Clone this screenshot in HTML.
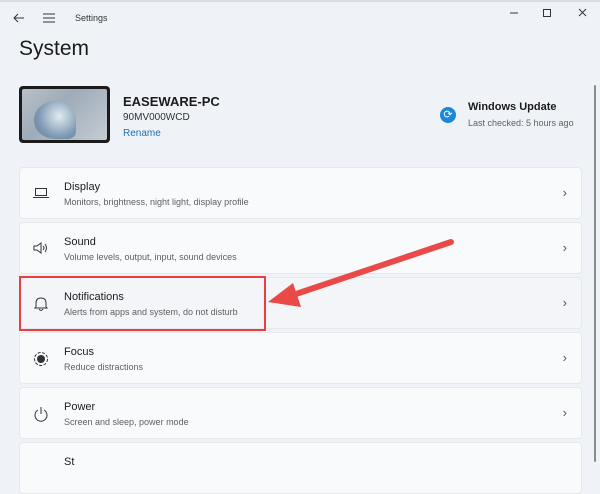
<!DOCTYPE html>
<html><head><style>
*{margin:0;padding:0;box-sizing:border-box}
body{width:600px;height:462px;overflow:hidden;background:#eff3f8;font-family:"Liberation Sans",sans-serif;position:relative;color:#1b1b1b}
.a{position:absolute}
.card{position:absolute;left:19px;width:563px;height:52px;background:#f9fafc;border:1px solid #e6e8ec;border-radius:4px}
.card .t{position:absolute;left:44px;top:13px;font-size:11px;color:#1b1b1b}
.card .s{position:absolute;left:44px;top:29px;font-size:9px;color:#606060}
.card .c{position:absolute;right:14px;top:17px;font-size:13px;color:#555}
.card svg{position:absolute;left:13px;top:18px}
</style></head><body>
<div class="a" style="left:0;top:0;width:600px;height:2px;background:#d8dde4"></div>
<svg class="a" style="left:12px;top:12px" width="14" height="12"><path d="M12 6H2M6 2L2 6L6 10" stroke="#333" stroke-width="1" fill="none"/></svg>
<svg class="a" style="left:42px;top:12px" width="14" height="12"><path d="M1 2H13M1 6H13M1 10H13" stroke="#333" stroke-width="1"/></svg>
<div class="a" style="left:75px;top:13px;font-size:9px;color:#333">Settings</div>
<svg class="a" style="left:505px;top:6px" width="90" height="14"><path d="M5 7H13" stroke="#333"/><rect x="38.5" y="3.5" width="7" height="7" fill="none" stroke="#333"/><path d="M74 3L81 10M81 3L74 10" stroke="#333"/></svg>
<div class="a" style="left:19px;top:37px;font-size:21px;color:#1b1b1b">System</div>
<div class="a" style="left:19px;top:86px;width:91px;height:57px;background:#1b1b1b;border-radius:4px"></div>
<div class="a" style="left:22px;top:89px;width:85px;height:51px;background:linear-gradient(135deg,#b9c1c8,#9eabb8 40%,#c5ccd3);border-radius:2px;overflow:hidden">
<div style="position:absolute;left:12px;top:12px;width:42px;height:38px;border-radius:50% 50% 20% 50%;background:radial-gradient(circle at 60% 40%,#e3ebf2,#7f9ab3 60%,#5c7894)"></div></div>
<div class="a" style="left:123px;top:94px;font-size:13px;font-weight:bold">EASEWARE-PC</div>
<div class="a" style="left:123px;top:112px;font-size:10px;color:#333">90MV000WCD</div>
<div class="a" style="left:123px;top:128px;font-size:10px;color:#1f6fb5">Rename</div>
<div class="a" style="left:440px;top:107px;width:16px;height:16px;border-radius:50%;background:#1a86dc;color:#fff;font-size:11px;text-align:center;line-height:16px">⟳</div>
<div class="a" style="left:468px;top:101px;font-size:11px;font-weight:bold">Windows Update</div>
<div class="a" style="left:468px;top:118px;font-size:9px;color:#606060">Last checked: 5 hours ago</div>
<div class="a" style="left:594px;top:85px;width:2px;height:377px;background:#8a8a8a;border-radius:1px"></div>

<div class="card" style="top:167px"><svg width="16" height="14"><rect x="2.5" y="2.5" width="11" height="7" fill="none" stroke="#333"/><path d="M0 11.5H16" stroke="#333"/></svg><div class="t">Display</div><div class="s">Monitors, brightness, night light, display profile</div><div class="c">›</div></div>
<div class="card" style="top:222px"><svg width="16" height="14"><path d="M1 5H4L8 2V12L4 9H1Z" fill="none" stroke="#333"/><path d="M10 5Q12 7 10 9M12 3Q15 7 12 11" fill="none" stroke="#333"/></svg><div class="t">Sound</div><div class="s">Volume levels, output, input, sound devices</div><div class="c">›</div></div>
<div class="card" style="top:277px;background:#f3f5f8"><svg width="16" height="16"><path d="M3 11V7Q3 2 8 2Q13 2 13 7V11L14 12H2Z" fill="none" stroke="#333"/><path d="M6 13Q8 16 10 13" fill="none" stroke="#333"/></svg><div class="t">Notifications</div><div class="s">Alerts from apps and system, do not disturb</div><div class="c">›</div></div>
<div class="card" style="top:332px"><svg width="16" height="16"><circle cx="8" cy="8" r="6.5" fill="none" stroke="#333" stroke-dasharray="3 1.5"/><circle cx="8" cy="8" r="4" fill="#333"/></svg><div class="t">Focus</div><div class="s">Reduce distractions</div><div class="c">›</div></div>
<div class="card" style="top:387px"><svg width="16" height="16"><path d="M5 4A6 6 0 1 0 11 4" fill="none" stroke="#333"/><path d="M8 1V8" stroke="#333"/></svg><div class="t">Power</div><div class="s">Screen and sleep, power mode</div><div class="c">›</div></div>
<div class="card" style="top:442px"><div class="t">St</div></div>

<div class="a" style="left:19px;top:276px;width:247px;height:55px;border:2.5px solid #e8403f"></div>
<svg class="a" style="left:0;top:0" width="600" height="462"><path d="M451 242L290 296" stroke="#ea4a47" stroke-width="6" stroke-linecap="round"/><path d="M268 302L293 283L301 307Z" fill="#ea4a47"/></svg>
</body></html>
